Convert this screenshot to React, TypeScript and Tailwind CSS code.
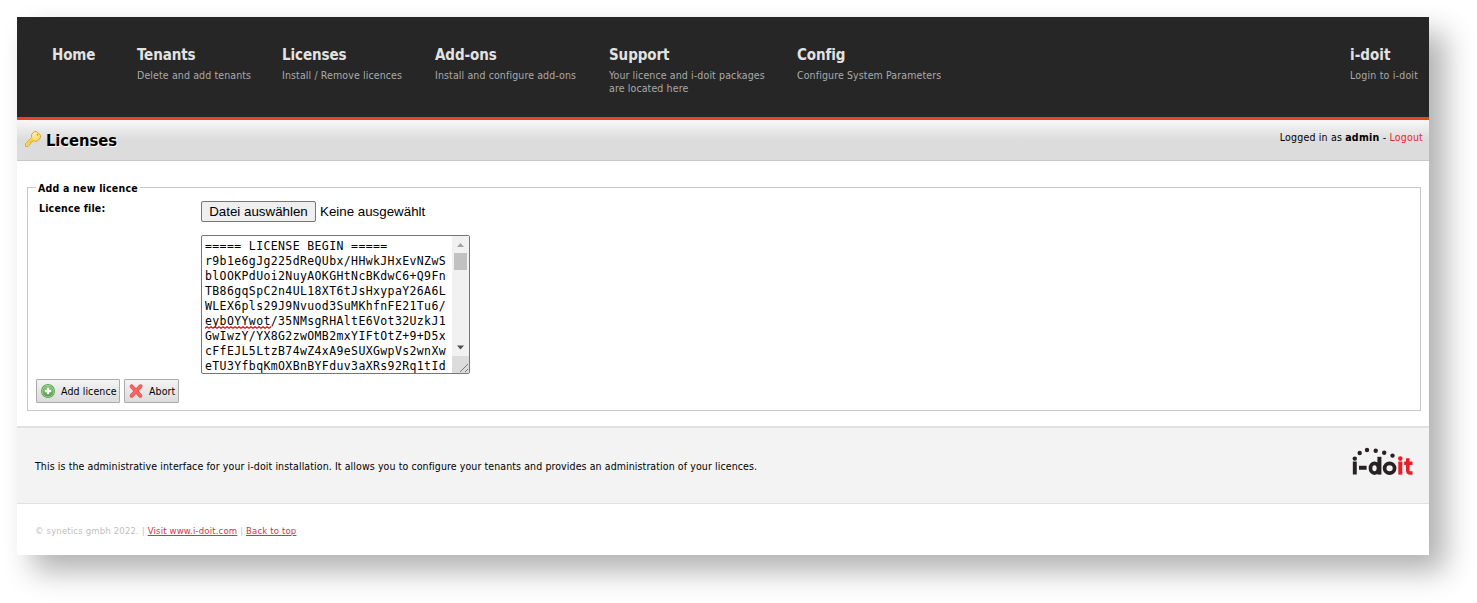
const navItems = [
  { title: 'Home', sub: '', box: 'w-[85px]' },
  { title: 'Tenants', sub: 'Delete and add tenants', box: 'w-[145px]' },
  { title: 'Licenses', sub: 'Install / Remove licences', box: 'w-[153px]' },
  { title: 'Add-ons', sub: 'Install and configure add-ons', box: 'w-[174px]' },
  { title: 'Support', sub: 'Your licence and i-doit packages\nare located here', box: 'w-[188px]' },
  { title: 'Config', sub: 'Configure System Parameters', box: 'w-[160px]' },
];

const licenceLines = [
  'r9b1e6gJg225dReQUbx/HHwkJHxEvNZwS',
  'blOOKPdUoi2NuyAOKGHtNcBKdwC6+Q9Fn',
  'TB86gqSpC2n4UL18XT6tJsHxypaY26A6L',
  'WLEX6pls29J9Nvuod3SuMKhfnFE21Tu6/',
];
const licenceTail = [
  'GwIwzY/YX8G2zwOMB2mxYIFtOtZ+9+D5x',
  'cFfEJL5LtzB74wZ4xA9eSUXGwpVs2wnXw',
  'eTU3YfbqKmOXBnBYFduv3aXRs92Rq1tId',
];

function KeyIcon() {
  return (
    <svg className="block h-4 w-4" viewBox="0 0 16 16">
      <defs>
        <linearGradient id="key" x1="0" y1="0" x2="1" y2="1">
          <stop offset="0" stopColor="#fffbd8" />
          <stop offset="1" stopColor="#f5cf3c" />
        </linearGradient>
      </defs>
      <path
        d="M9.2.6h2.6l3.6 3.6v2.6l-3.2 3.4H9.6L8.4 9.4 7.2 11H5.6v1.6L3.2 15.4H.6v-2.6l6-6.2V3.4z"
        fill="url(#key)"
        stroke="#dba03a"
        strokeWidth="1"
      />
      <path d="M2 13.6 8 7.6" stroke="#f4d21c" strokeWidth="1.6" />
      <path d="M12 3.2 13 4.2" stroke="#c98a2c" strokeWidth="1.3" />
    </svg>
  );
}

function AddIcon() {
  return (
    <svg className="block h-4 w-4" viewBox="0 0 16 16">
      <defs>
        <linearGradient id="add" x1="0" y1="0" x2="0" y2="1">
          <stop offset="0" stopColor="#8cc97c" />
          <stop offset="1" stopColor="#4c9c42" />
        </linearGradient>
      </defs>
      <circle cx="8" cy="8" r="7" fill="#5fa653" />
      <circle cx="8" cy="8" r="5.7" fill="url(#add)" stroke="#b5deaa" strokeWidth="0.6" />
      <path d="M8 4.8v6.4M4.8 8h6.4" stroke="#fff" strokeWidth="2.3" />
    </svg>
  );
}

function CrossIcon() {
  return (
    <svg className="block h-4 w-4" viewBox="0 0 16 16">
      <path d="M3.6 3.4 12.4 12.8M12.6 3.2 3.6 12.8" stroke="#e0504e" strokeWidth="3.9" strokeLinecap="round" />
      <path d="M3.7 3.6 12.3 12.6M12.4 3.4 3.7 12.6" stroke="#fb6663" strokeWidth="2.7" strokeLinecap="round" />
    </svg>
  );
}

function Logo() {
  const dots = [[8.7, 6], [16, 3], [24.7, 3.7], [33.2, 5.7], [41.5, 8.6]];
  return (
    <svg className="block h-[32px] w-[66px]" viewBox="0 0 66 32">
      {dots.map(([x, y]) => (
        <circle key={x} cx={x} cy={y} r="2.2" fill="#262223" />
      ))}
      <circle cx="3.8" cy="11.6" r="2.2" fill="#262223" />
      <path d="M3.8 14.5V27.6M8 20.8H15.6" stroke="#262223" strokeWidth="3.9" />
      <ellipse cx="23.5" cy="21.2" rx="4" ry="4.9" fill="none" stroke="#262223" strokeWidth="3.7" />
      <path d="M28.4 9.8V27.6" stroke="#262223" strokeWidth="4" />
      <ellipse cx="38.6" cy="21.2" rx="5" ry="4.9" fill="none" stroke="#262223" strokeWidth="3.7" />
      <circle cx="49.3" cy="11.6" r="2.3" fill="#ee1c25" />
      <path d="M49.3 14.5V27.6" stroke="#ee1c25" strokeWidth="4" />
      <path d="M56.8 11.3V23.2Q56.8 26 59.4 26H61.5M53.2 16.2H61.5" fill="none" stroke="#ee1c25" strokeWidth="3.6" />
    </svg>
  );
}

export default function App() {
  return (
    <div className="h-[603px] w-[1477px] overflow-hidden bg-white pt-[17px] pl-[17px] font-['DejaVu_Sans_Condensed','DejaVu_Sans',sans-serif] text-[10.5px] leading-[13px] tracking-[0.1px] text-black">
      <div className="flex h-[538px] w-[1412px] flex-col bg-white shadow-[16px_16px_28px_rgba(0,0,0,0.31)]">
        <header className="flex h-[103px] shrink-0 items-start border-b-3 border-[#e8431a] bg-[#262626] pt-[28px] pl-[35px]">
          {navItems.map((n) => (
            <a key={n.title} className={`block shrink-0 ${n.box}`}>
              <span className="block text-[15px] leading-5 font-bold tracking-[-0.1px] whitespace-nowrap text-[#e2e2e2]">{n.title}</span>
              <span className="mt-1 block tracking-[0.12px] whitespace-pre text-[#aaa]">{n.sub}</span>
            </a>
          ))}
          <a className="mr-[11px] ml-auto block w-[68px]">
            <span className="block text-[15px] leading-5 font-bold tracking-[0.05px] whitespace-nowrap text-[#e2e2e2]">i-doit</span>
            <span className="mt-1 block tracking-[0.2px] whitespace-nowrap text-[#aaa]">Login to i-doit</span>
          </a>
        </header>

        <div className="flex h-[41px] shrink-0 items-start border-b border-[#c8c8c8] bg-[linear-gradient(#f7f7f7,#dcdcdc_50%,#dcdcdc)] pt-[11px] pr-[6px] pl-2">
          <KeyIcon />
          <h1 className="ml-[5px] text-[16.5px] leading-5 font-bold tracking-[-0.1px] [text-shadow:1px_1px_0_#fff]">Licenses</h1>
          <p className="ml-auto tracking-[0.18px] whitespace-nowrap">
            Logged in as <b className="tracking-[0.3px]">admin</b> - <a className="text-[#e5292f]">Logout</a>
          </p>
        </div>

        <main className="h-[265px] shrink-0 px-[10px] pt-[19px]">
          <fieldset className="h-[231px] w-[1394px] border border-[#c8c8c8] px-2">
            <legend className="h-[14px] px-[2px] leading-[16px] font-bold tracking-[0.22px] whitespace-nowrap">Add a new licence</legend>
            <div className="flex h-[185px] pt-[7px]">
              <div className="w-[165px] shrink-0 pt-[1px] pl-[3px] font-bold tracking-[0.18px]">Licence file:</div>
              <div className="tracking-normal">
                <div className="flex items-center font-['Liberation_Sans',sans-serif] text-[13.33px] leading-[15px]">
                  <button className="h-[21px] w-[115px] rounded-[2px] border border-[#767676] bg-[#efefef] whitespace-nowrap">Datei auswählen</button>
                  <span className="ml-1 whitespace-nowrap">Keine ausgewählt</span>
                </div>
                <div className="mt-[13px] flex h-[139px] w-[269px] overflow-hidden rounded-[2px] border border-[#767676]">
                  <div className="w-[250px] pt-[3px] pl-[3px] font-['DejaVu_Sans_Mono',monospace] text-[11.5px] leading-[15px] tracking-[0.38px] whitespace-pre">
                    <div>===== LICENSE BEGIN =====</div>
                    {licenceLines.map((l) => (
                      <div key={l}>{l}</div>
                    ))}
                    <div>
                      <span className="relative">
                        eybOYYwot
                        <svg className="absolute bottom-[-1px] left-0 h-[3px] w-[66px]" viewBox="0 0 66 3">
                          <defs>
                            <pattern id="spell" width="4" height="3" patternUnits="userSpaceOnUse">
                              <path d="M-1 1.5 0 2.2 2 .7 4 2.2 5 1.5" fill="none" stroke="#f00" strokeWidth="1.2" />
                            </pattern>
                          </defs>
                          <rect width="66" height="3" fill="url(#spell)" />
                        </svg>
                      </span>
                      /35NMsgRHAltE6Vot32UzkJ1
                    </div>
                    {licenceTail.map((l) => (
                      <div key={l}>{l}</div>
                    ))}
                  </div>
                  <div className="flex w-[17px] shrink-0 flex-col bg-[#f1f1f1]">
                    <svg className="block h-[17px] w-[17px]" viewBox="0 0 17 17">
                      <path d="M5 11 8.5 7 12 11z" fill="#a3a3a3" />
                    </svg>
                    <div className="mx-auto h-[17px] w-[13px] bg-[#c1c1c1]" />
                    <div className="grow" />
                    <svg className="block h-[17px] w-[17px]" viewBox="0 0 17 17">
                      <path d="M5 6.5 8.5 10.5 12 6.5z" fill="#505050" />
                    </svg>
                    <svg className="block h-[17px] w-[17px] bg-[#dcdcdc]" viewBox="0 0 17 17">
                      <path d="M8 16 16 8M13 16 16 13" stroke="#777" />
                    </svg>
                  </div>
                </div>
              </div>
            </div>
            <div className="flex gap-1">
              <button className="flex h-6 w-[84px] items-center rounded-[1px] border border-[#aaa] bg-linear-to-b from-[#f3f3f3] to-[#dcdcdc] pl-[3px] whitespace-nowrap">
                <AddIcon />
                <span className="ml-[5px]">Add licence</span>
              </button>
              <button className="flex h-6 w-[55px] items-center rounded-[1px] border border-[#aaa] bg-linear-to-b from-[#f3f3f3] to-[#dcdcdc] pl-[3px] whitespace-nowrap">
                <CrossIcon />
                <span className="ml-[5px]">Abort</span>
              </button>
            </div>
          </fieldset>
        </main>

        <section className="flex h-[78px] shrink-0 items-start justify-between border-t-2 border-b border-t-[#e0e0e0] border-b-[#e0e0e0] bg-[#f3f3f3] pr-[12px] pl-[18px]">
          <p className="pt-[32px] whitespace-nowrap">
            This is the administrative interface for your i-doit installation. It allows you to configure your tenants and provides an administration of your licences.
          </p>
          <div className="pt-[19px]">
            <Logo />
          </div>
        </section>

        <footer className="pt-[20px] pl-[18px] text-[9.5px] tracking-[0.15px] whitespace-nowrap text-[#c0c0c0]">
          © synetics gmbh 2022. | <a className="text-[#d8304c] underline">Visit www.i-doit.com</a> | <a className="text-[#d8304c] underline">Back to top</a>
        </footer>
      </div>
    </div>
  );
}
